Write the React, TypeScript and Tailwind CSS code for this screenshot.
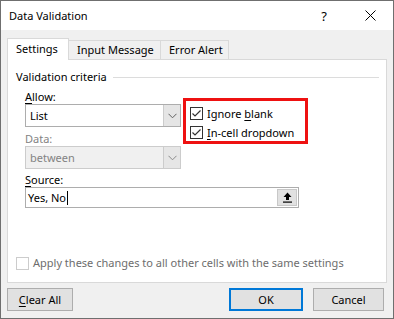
import React from 'react';

function CheckBox({ checked, disabled }: { checked?: boolean; disabled?: boolean }) {
  return (
    <div
      className={`w-[13px] h-[13px] border bg-white flex items-center justify-center shrink-0 ${
        disabled ? 'border-[#cccccc]' : 'border-[#333333]'
      }`}
    >
      {checked && (
        <svg width="11" height="11" viewBox="0 0 11 11">
          <path d="M1.5 5.5 L4 8 L9.5 2.5" fill="none" stroke="#333333" strokeWidth="1.2" />
        </svg>
      )}
    </div>
  );
}

function Chevron({ color }: { color: string }) {
  return (
    <svg width="9" height="6" viewBox="0 0 9 6">
      <path d="M0.5 0.8 L4.5 4.8 L8.5 0.8" fill="none" stroke={color} strokeWidth="1" />
    </svg>
  );
}

function Select({ value, disabled }: { value: string; disabled?: boolean }) {
  return (
    <div
      className={`flex h-[23px] w-[156px] border ${
        disabled ? 'border-[#cccccc] bg-[#f0f0f0] text-[#838383]' : 'border-[#adadad] bg-white text-black'
      }`}
    >
      <div className="flex-1 flex items-center pl-[4px]">{value}</div>
      <div
        className={`w-[17px] flex items-center justify-center border-l ${
          disabled ? 'border-[#cccccc] bg-[#e6e6e6]' : 'border-[#cccccc] bg-[#e5e5e5]'
        }`}
      >
        <Chevron color={disabled ? '#8a8a8a' : '#606060'} />
      </div>
    </div>
  );
}

function Button({ label, underline, primary, width }: { label: string; underline?: string; primary?: boolean; width: string }) {
  return (
    <div
      className={`h-[23px] ${width} flex items-center justify-center bg-[#e1e1e1] ${
        primary ? 'border-2 border-[#0078d7]' : 'border border-[#adadad]'
      }`}
    >
      {underline ? (
        <span>
          <span className="underline underline-offset-2">{underline}</span>
          {label}
        </span>
      ) : (
        label
      )}
    </div>
  );
}

export default function App() {
  return (
    <div className="w-[394px] h-[319px] bg-[#f0f0f0] border border-[#6f6f6f] flex flex-col font-['Noto_Sans',sans-serif] text-[11px] leading-[16px] text-black overflow-hidden">
      {/* Title bar */}
      <div className="h-[29px] bg-white flex items-center pl-[8px] shrink-0">
        <span className="flex-1 text-[11px]">Data Validation</span>
        <span className="w-[10px] text-center mr-[36px] text-[13px]">?</span>
        <svg width="11" height="11" viewBox="0 0 11 11" className="mr-[17px]">
          <path d="M0.5 0.5 L10.5 10.5 M10.5 0.5 L0.5 10.5" stroke="#000" strokeWidth="1" />
        </svg>
      </div>

      {/* Tabs */}
      <div className="flex items-end ml-[6px] mt-[8px] h-[21px] shrink-0">
        <div className="relative z-10 h-[22px] -mb-px w-[62px] bg-white border border-b-0 border-[#d9d9d9] flex items-center pl-[8px] pb-[1px]">
          Settings
        </div>
        <div className="h-[19px] w-[92px] border border-l-0 border-b-0 border-[#d9d9d9] flex items-center pl-[8px]">
          Input Message
        </div>
        <div className="h-[19px] w-[68px] border border-l-0 border-b-0 border-[#d9d9d9] flex items-center pl-[8px]">
          Error Alert
        </div>
      </div>

      {/* Panel */}
      <div className="mx-[6px] h-[224px] bg-white border border-[#d9d9d9] flex flex-col shrink-0">
        <div className="flex items-center mt-[9px] pl-[8px] pr-[7px]">
          <span>Validation criteria</span>
          <div className="flex-1 h-px bg-[#dcdcdc] ml-[6px] mt-[1px]" />
        </div>

        <div className="flex mt-[4px] pl-[17px]">
          <div className="flex flex-col">
            <span>
              <span className="underline underline-offset-2">A</span>llow:
            </span>
            <div className="mt-[-1px]">
              <Select value="List" />
            </div>
            <span className="mt-[4px] text-[#838383]">Data:</span>
            <div className="mt-[-1px]">
              <Select value="between" disabled />
            </div>
          </div>
          <div className="ml-[2px] mt-[9px] self-start border-[3px] border-[#ee1111] pl-[4px] pr-[11px] pt-[6px] pb-[2px] flex flex-col gap-[6px]">
            <div className="flex items-center gap-[4px] h-[13px]">
              <CheckBox checked />
              <span>
                Ignore <span className="underline underline-offset-2">b</span>lank
              </span>
            </div>
            <div className="flex items-center gap-[4px] h-[13px]">
              <CheckBox checked />
              <span>
                <span className="underline underline-offset-2">I</span>n-cell dropdown
              </span>
            </div>
          </div>
        </div>

        <div className="flex flex-col pl-[17px] mt-[3px]">
          <span>
            <span className="underline underline-offset-2">S</span>ource:
          </span>
          <div className="mt-[-1px] w-[274px] h-[21px] border border-[#adadad] bg-white flex">
            <div className="flex-1 flex items-center pl-[2px]">
              Yes, No<span className="inline-block w-px h-[14px] bg-black ml-[1px]" />
            </div>
            <div className="w-[20px] m-[1px] bg-[#e1e1e1] border border-[#c8c8c8] flex items-center justify-center">
              <svg width="9" height="11" viewBox="0 0 9 11">
                <path d="M4.5 0.5 L8.5 5 L6 5 L6 8 L3 8 L3 5 L0.5 5 Z" fill="#000" />
                <rect x="0" y="9.5" width="9" height="1.2" fill="#000" />
              </svg>
            </div>
          </div>
        </div>

        <div className="flex items-center gap-[4px] pl-[8px] mt-[47px] text-[#6d6d6d]">
          <CheckBox disabled />
          <span>Apply these changes to all other cells with the same settings</span>
        </div>
      </div>

      {/* Buttons */}
      <div className="flex items-center mt-[5px] pl-[6px] pr-[9px]">
        <Button label="lear All" underline="C" width="w-[66px]" />
        <div className="flex-1" />
        <Button label="OK" primary width="w-[74px]" />
        <div className="w-[10px]" />
        <Button label="Cancel" width="w-[71px]" />
      </div>
    </div>
  );
}
